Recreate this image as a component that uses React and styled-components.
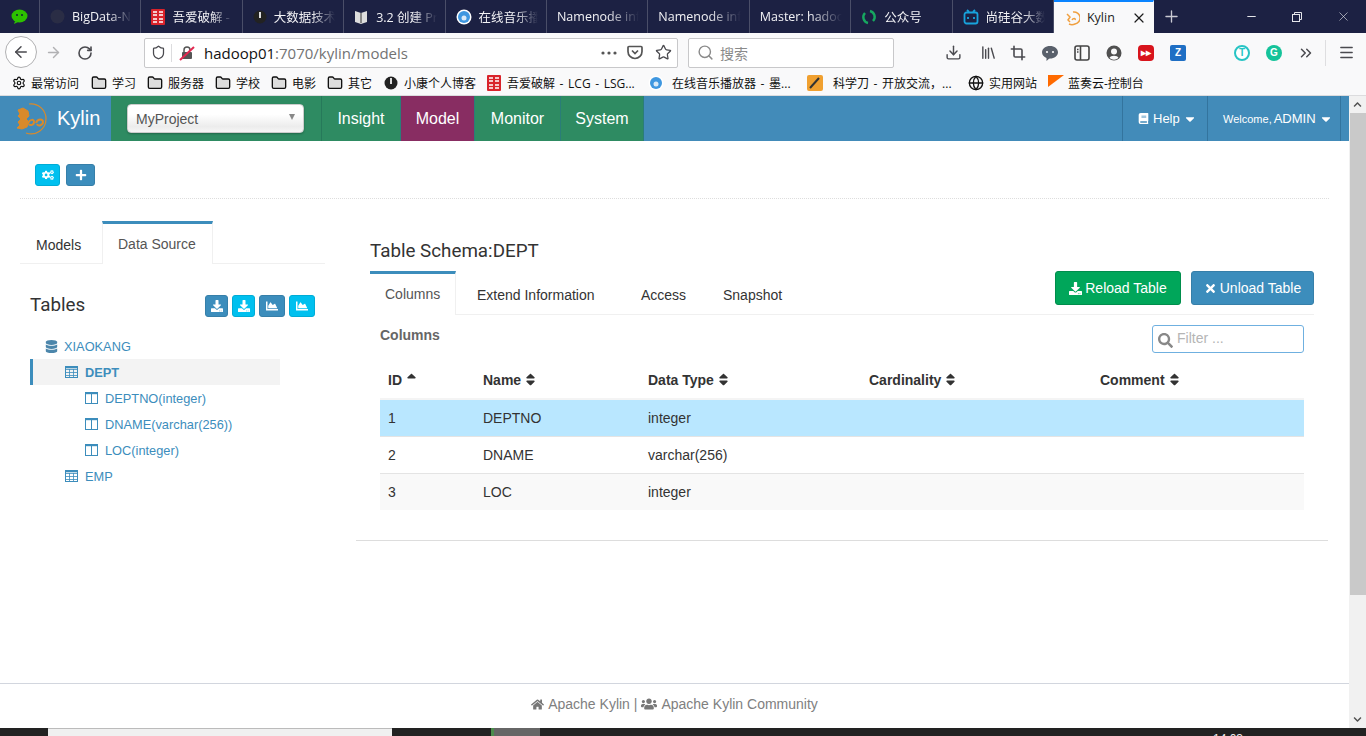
import React from "react";
import styled, { createGlobalStyle } from "styled-components";
import {
  ArrowLeft,
  ArrowRight,
  RotateCw,
  Shield,
  Star,
  Search,
  Download,
  Library,
  Crop,
  Menu,
  Settings,
  Folder,
  Globe,
  ChevronsRight,
  Minus,
  X,
  Plus,
} from "lucide-react";
import {
  FaCogs,
  FaPlus,
  FaDownload,
  FaChartArea,
  FaDatabase,
  FaSearch,
  FaTimes,
  FaBook,
  FaHome,
  FaUsers,
  FaSort,
  FaSortUp,
  FaCaretDown,
  FaChevronUp,
  FaChevronDown,
} from "react-icons/fa";

const GlobalStyle = createGlobalStyle`
  html, body {
    margin: 0;
    height: 736px;
    overflow: hidden;
    background: #fff;
  }
  * {
    box-sizing: border-box;
  }
  body {
    font-family: "Liberation Sans", Arial, sans-serif;
    color: #333;
  }
`;

const CJK = `"Open Sans", "Noto Sans CJK SC", sans-serif`;

const Screen = styled.div`
  display: flex;
  flex-direction: column;
  width: 1366px;
  height: 736px;
`;

/* browser chrome */
const TabStrip = styled.div`
  display: flex;
  height: 33px;
  background: #1c2143;
  flex: none;
`;

const PinnedTab = styled.div`
  width: 40px;
  display: flex;
  align-items: center;
  justify-content: center;
  border-right: 1px solid #4a4e68;
`;

const BrowserTab = styled.div`
  width: ${(p) => (p.$active ? "100px" : "101.4px")};
  display: flex;
  align-items: center;
  gap: 7px;
  padding: 0 0 0 10px;
  font: 12.5px ${CJK};
  color: ${(p) => (p.$active ? "#1c1c1c" : "#f2f2f5")};
  background: ${(p) => (p.$active ? "#f9f9fa" : "transparent")};
  border-right: 1px solid ${(p) => (p.$active ? "transparent" : "#4a4e68")};
  border-top: ${(p) => (p.$active ? "2px solid #0a84ff" : "none")};
  overflow: hidden;
  white-space: nowrap;
  flex: none;
`;

const TabTitle = styled.span`
  flex: 1;
  overflow: hidden;
  margin-right: ${(p) => (p.$plain ? "0" : "8px")};
  -webkit-mask-image: ${(p) =>
    p.$plain ? "none" : "linear-gradient(90deg, #000 62%, transparent 100%)"};
  mask-image: ${(p) =>
    p.$plain ? "none" : "linear-gradient(90deg, #000 62%, transparent 100%)"};
`;

const NewTab = styled.div`
  width: 34px;
  margin-left: 1px;
  display: flex;
  align-items: center;
  justify-content: center;
  color: #c9cad3;
`;

const WindowControls = styled.div`
  margin-left: auto;
  display: flex;
  align-items: center;
  color: #e4e5ea;
`;

const WindowButton = styled.div`
  width: 46px;
  display: flex;
  justify-content: center;
`;

const RestoreIcon = () => (
  <svg width="12" height="12" viewBox="0 0 12 12" fill="none" stroke="currentColor">
    <rect x="1.5" y="3.5" width="7" height="7" />
    <path d="M3.5 3V1.5h7v7H9" />
  </svg>
);

const NavBar = styled.div`
  height: 35px;
  flex: none;
  display: flex;
  align-items: center;
  padding-top: 4px;
  background: #f9f9fa;
  color: #4a4a4f;
`;

const BackCircle = styled.div`
  width: 32px;
  height: 32px;
  margin-left: 5px;
  margin-top: -1px;
  border-radius: 50%;
  background: #fff;
  border: 1px solid #b1b1b3;
  display: flex;
  align-items: center;
  justify-content: center;
  flex: none;
`;

const NavIcon = styled.div`
  width: ${(p) => p.$w || 32}px;
  display: flex;
  justify-content: center;
  align-items: center;
  color: ${(p) => p.$color || "inherit"};
  flex: none;
`;

const UrlBar = styled.div`
  width: 534px;
  height: 30px;
  margin: 0 0 0 43px;
  background: #fff;
  border: 1px solid #c8c8ca;
  border-radius: 2px;
  display: flex;
  align-items: center;
  font: 15px "Open Sans", sans-serif;
  flex: none;
`;

const UrlDivider = styled.div`
  width: 1px;
  height: 18px;
  background: #dcdcde;
  margin: 0 7px 0 0;
`;

const UrlGap = styled.span`
  width: 9px;
  flex: none;
`;

const UrlHost = styled.span`
  color: #111;
`;

const UrlPath = styled.span`
  color: #737373;
  flex: 1;
`;

const SearchBox = styled.div`
  width: 206px;
  height: 30px;
  margin-left: 10px;
  background: #fff;
  border: 1px solid #c8c8ca;
  border-radius: 2px;
  display: flex;
  align-items: center;
  gap: 6px;
  padding-left: 8px;
  color: #8a8a8a;
  font: 14px "Noto Sans CJK SC", sans-serif;
  flex: none;
`;

const ToolIcon = styled.div`
  width: 32px;
  display: flex;
  justify-content: center;
  align-items: center;
  flex: none;
  margin-left: ${(p) => p.$ml || 0}px;
`;

const ToolBadge = styled.div`
  width: 16px;
  height: 16px;
  border-radius: ${(p) => p.$radius || "50%"};
  background: ${(p) => p.$bg};
  color: ${(p) => p.$fg || "#fff"};
  border: ${(p) => p.$border || "none"};
  font: bold 10px "Liberation Sans", sans-serif;
  display: flex;
  align-items: center;
  justify-content: center;
`;

const ToolDivider = styled.div`
  width: 1px;
  height: 26px;
  background: #dedee0;
  margin: 0 6px 0 3px;
`;

const BookmarkBar = styled.div`
  height: 28px;
  flex: none;
  background: #f9f9fa;
  border-bottom: 1px solid #dcdcde;
  display: flex;
  align-items: center;
  padding: 3px 0 0 12px;
  font: 12px ${CJK};
  word-spacing: 1.5px;
  color: #111;
`;

const Bookmark = styled.div`
  display: flex;
  align-items: center;
  gap: ${(p) => p.$gap || 5}px;
  white-space: nowrap;
  width: ${(p) => p.$w}px;
  flex: none;
`;

const RedIcon = () => (
  <svg width="14" height="16" viewBox="0 0 14 16">
    <rect width="14" height="16" rx="1" fill="#d9232b" />
    <path d="M2 3h4M8 3h4M2 6h4M8 6h4M2 10h4M8 10h4M2 13h4M8 13h4" stroke="#fff" strokeWidth="1.3" />
  </svg>
);

const PlayerIcon = () => (
  <svg width="16" height="16" viewBox="0 0 16 16">
    <circle cx="8" cy="8" r="7.5" fill="#fff" />
    <circle cx="8" cy="8" r="6" fill="#3f97e0" />
    <circle cx="8" cy="9" r="2.5" fill="#d9e9f7" />
  </svg>
);

const DarkDot = () => (
  <svg width="14" height="16" viewBox="0 0 14 16">
    <circle cx="7" cy="8" r="6.5" fill="#222" />
    <path d="M7 3v6" stroke="#ddd" strokeWidth="2" />
  </svg>
);

const BubbleIcon = () => (
  <svg width="18" height="18" viewBox="0 0 18 18">
    <path d="M9 2c4.400 0 8 2.700 8 6.300s-3.600 6.300-8 6.300l-1 .1-2.500 2.300V14C3 13 1 11 1 8.300 1 4.700 4.600 2 9 2z" fill="#59606b" />
    <circle cx="6" cy="8" r="1.1" fill="#f9f9fa" />
    <circle cx="12" cy="8" r="1.1" fill="#f9f9fa" />
  </svg>
);

const SidebarIcon = () => (
  <svg width="16" height="16" viewBox="0 0 16 16" fill="none" stroke="#444" strokeWidth="1.6">
    <rect x="1" y="1" width="14" height="14" rx="2" />
    <path d="M6.500 1v14M3 4.500h1.500M3 7h1.500" />
  </svg>
);

const PersonIcon = () => (
  <svg width="16" height="16" viewBox="0 0 16 16">
    <circle cx="8" cy="8" r="7.500" fill="#505050" />
    <circle cx="8" cy="6.500" r="3" fill="#f9f9fa" />
    <path d="M3.500 13c1-3 8-3 9 0a7 7 0 0 1-9 0z" fill="#f9f9fa" />
  </svg>
);

/* page area */
const Viewport = styled.div`
  flex: 1;
  display: flex;
  min-height: 0;
`;

const Page = styled.div`
  flex: 1;
  display: flex;
  flex-direction: column;
  min-width: 0;
`;

const Scrollbar = styled.div`
  width: 17px;
  display: flex;
  flex-direction: column;
  background: #f1f1f1;
  color: #505050;
`;

const ScrollArrow = styled.div`
  height: 17px;
  display: flex;
  align-items: center;
  justify-content: center;
  flex: none;
`;

const ScrollThumb = styled.div`
  height: 482px;
  background: #c9c9c9;
  margin: 0 0 auto 1px;
`;

const Header = styled.header`
  height: 45px;
  flex: none;
  display: flex;
  background: #428bb9;
  color: #fff;
`;

const Brand = styled.div`
  width: 111px;
  display: flex;
  align-items: center;
  gap: 9px;
  padding-left: 14px;
  font-size: 20px;
`;

const ProjectCell = styled.div`
  width: 211px;
  background: #2e8b62;
  border-right: 1px solid #26795a;
  padding: 8px 0 0 16px;
`;

const ProjectSelect = styled.div`
  width: 177px;
  height: 29px;
  border-radius: 4px;
  background: linear-gradient(#fff 35%, #ececec 80%, #f6f6f6);
  border: 1px solid #ccc;
  box-shadow: 0 1px 2px rgba(0, 0, 0, 0.25);
  display: flex;
  align-items: center;
  justify-content: space-between;
  padding: 0 8px;
  font-size: 14px;
  color: #555;
`;

const SelectCaret = styled.span`
  width: 0;
  height: 0;
  border-left: 3.5px solid transparent;
  border-right: 3.5px solid transparent;
  border-top: 6px solid #888;
  margin-top: -3px;
`;

const MainNavItem = styled.div`
  width: ${(p) => p.$w}px;
  display: flex;
  align-items: center;
  justify-content: center;
  font-size: 16px;
  background: ${(p) => (p.$active ? "#882d62" : "#2e8b62")};
  border-right: 1px solid #2a7d78;
`;

const HeaderRight = styled.div`
  margin-left: auto;
  display: flex;
  margin-right: 8px;
`;

const HeaderItem = styled.div`
  width: ${(p) => p.$w}px;
  display: flex;
  align-items: center;
  padding-left: ${(p) => p.$pl}px;
  gap: 4px;
  font-size: ${(p) => p.$size}px;
  border-left: 1px solid #33749e;
  border-right: ${(p) => (p.$last ? "1px solid #33749e" : "none")};
`;

const HeaderCaret = styled(FaCaretDown)`
  font-size: 14px;
  margin-left: -1px;
`;

const AdminName = styled.span`
  font-size: 13px;
  margin-left: -2px;
`;

const Main = styled.main`
  flex: 1;
  padding: 0 20px;
  min-height: 0;
`;

const ActionBar = styled.div`
  height: 58px;
  padding: 23px 0 0 15px;
  border-bottom: 1px dotted #ddd;
  display: flex;
  align-items: flex-start;
  gap: 6px;
`;

const IconButton = styled.div`
  width: ${(p) => p.$w || 25}px;
  height: 22px;
  border-radius: 3px;
  color: #fff;
  font-size: 12px;
  background: ${(p) => (p.$light ? "#00c0ef" : "#3c8dbc")};
  border: 1px solid ${(p) => (p.$light ? "#00acd6" : "#367fa9")};
  display: flex;
  align-items: center;
  justify-content: center;
`;

const Content = styled.div`
  display: flex;
  padding-top: 22px;
`;

const LeftColumn = styled.aside`
  width: 305px;
  flex: none;
`;

const LeftTabs = styled.div`
  height: 43px;
  display: flex;
  border-bottom: 1px solid #f0f0f0;
  font-size: 14px;
`;

const LeftTab = styled.div`
  width: ${(p) => p.$w}px;
  height: ${(p) => (p.$active ? "43px" : "42px")};
  display: flex;
  align-items: center;
  padding: ${(p) => (p.$active ? "0 0 0 15px" : "2px 0 0 15px")};
  color: ${(p) => (p.$active ? "#555" : "#333")};
  background: #fff;
  border-top: 3px solid ${(p) => (p.$active ? "#3c8dbc" : "transparent")};
  border-left: 1px solid ${(p) => (p.$active ? "#f0f0f0" : "transparent")};
  border-right: 1px solid ${(p) => (p.$active ? "#f0f0f0" : "transparent")};
`;

const TablesHeader = styled.div`
  display: flex;
  align-items: center;
  justify-content: space-between;
  margin-top: 31px;
  padding: 0 10px;
  height: 22px;
`;

const TablesTitle = styled.h3`
  margin: -2px 0 0;
  font: 400 18.8px Roboto, sans-serif;
  color: #333;
`;

const ButtonGroup = styled.div`
  display: flex;
  gap: 4px;
`;

const Tree = styled.div`
  width: 250px;
  margin: 16px 0 0 10px;
`;

const TreeRow = styled.div`
  height: 26px;
  display: flex;
  align-items: center;
  gap: 7px;
  padding-left: ${(p) => p.$indent - (p.$selected ? 3 : 0)}px;
  font-size: 12.8px;
  font-weight: ${(p) => (p.$selected ? "bold" : "normal")};
  color: #3c8dbc;
  background: ${(p) => (p.$selected ? "#f3f3f3" : "transparent")};
  border-left: ${(p) => (p.$selected ? "3px solid #3c8dbc" : "none")};
`;

const TreeDbIcon = styled(FaDatabase)`
  color: #4c86ab;
  font-size: 13px;
  margin-right: -1px;
`;

const TableIcon = () => (
  <svg width="13" height="12" viewBox="0 0 13 12" fill="none" stroke="#3c8dbc">
    <rect x="0.500" y="0.500" width="12" height="11" />
    <path d="M0 3.500h13M0 6.500h13M0 9.500h13M4.500 3v9M8.500 3v9" strokeWidth="0.800" />
    <path d="M0 1.500h13" strokeWidth="1.600" />
  </svg>
);

const ColumnIcon = () => (
  <svg width="13" height="12" viewBox="0 0 13 12" fill="none" stroke="#3c8dbc">
    <rect x="0.500" y="0.500" width="12" height="11" />
    <path d="M6.500 1v11" />
    <path d="M0 1.500h13" strokeWidth="1.400" />
  </svg>
);

const RightColumn = styled.section`
  width: 972px;
  margin-left: 31px;
  padding: 0 14px;
  height: 320px;
  border-bottom: 1px solid #ddd;
`;

const SchemaTitle = styled.h3`
  margin: 0;
  height: 50px;
  padding-top: 15px;
  font: 400 18.8px/30px Roboto, sans-serif;
  color: #333;
`;

const SchemaTabs = styled.div`
  height: 44px;
  display: flex;
  border-bottom: 1px solid #f0f0f0;
  font-size: 14px;
`;

const SchemaTab = styled.div`
  width: ${(p) => p.$w}px;
  height: ${(p) => (p.$active ? "44px" : "43px")};
  display: flex;
  align-items: center;
  padding: ${(p) => (p.$active ? `0 0 2px ${p.$pl}px` : `2px 0 0 ${p.$pl}px`)};
  color: ${(p) => (p.$active ? "#555" : "#333")};
  background: #fff;
  border-top: 3px solid ${(p) => (p.$active ? "#3c8dbc" : "transparent")};
  border-right: 1px solid ${(p) => (p.$active ? "#f0f0f0" : "transparent")};
`;

const TabActions = styled.div`
  margin-left: auto;
  display: flex;
  gap: 10px;
`;

const ActionButton = styled.div`
  width: ${(p) => p.$w}px;
  height: 34px;
  border-radius: 3px;
  color: #fff;
  background: ${(p) => p.$bg};
  border: 1px solid ${(p) => p.$line};
  font-size: 14px;
  display: flex;
  align-items: center;
  justify-content: center;
  gap: 3px;
`;

const TabBody = styled.div`
  padding: 10px 10px 0;
`;

const BodyTop = styled.div`
  display: flex;
  justify-content: space-between;
  height: 37px;
`;

const SectionLabel = styled.div`
  font-size: 14px;
  font-weight: bold;
  color: #666;
  line-height: 20px;
`;

const FilterBox = styled.div`
  width: 152px;
  height: 28px;
  border: 1px solid #6fb0e0;
  border-radius: 3px;
  display: flex;
  align-items: center;
  gap: 4px;
  padding: 0 0 2px 5px;
  font-size: 14px;
  color: #b5b5b5;
`;

const FilterIcon = styled.span`
  color: #888;
  display: flex;
  font-size: 15px;
  margin-top: 5px;
`;

const Table = styled.table`
  width: 924px;
  border-collapse: collapse;
  table-layout: fixed;
  font-size: 14px;
`;

const HeadCell = styled.th`
  width: ${(p) => p.$w}px;
  height: 37px;
  padding: 2px 8px 0;
  text-align: left;
  font-weight: bold;
  color: #333;
  border-bottom: 2px solid #f4f4f4;
  white-space: nowrap;
`;

const SortIcon = styled.span`
  font-size: 15px;
  margin-left: 2px;
  vertical-align: -2px;
`;

const Row = styled.tr`
  background: ${(p) => p.$bg || "#fff"};
`;

const Cell = styled.td`
  height: 37px;
  padding: 0 8px;
  color: #333;
  border-top: 1px solid #e4e4e4;
`;

const Footer = styled.footer`
  height: 45px;
  flex: none;
  border-top: 1px solid #d2d6de;
  display: flex;
  align-items: center;
  justify-content: center;
  gap: 4px;
  padding-bottom: 4px;
  font-size: 14px;
  color: #808080;
`;

const FooterIcon = styled.span`
  display: flex;
  color: #777;
  font-size: 13px;
`;

const Taskbar = styled.div`
  height: 8px;
  flex: none;
  background: #222;
  display: flex;
  overflow: hidden;
`;

const TaskbarSearch = styled.div`
  width: 344px;
  margin-left: 48px;
  background: #f0f0f0;
  border-top: 1px solid #bbb;
`;

const TaskbarApp = styled.div`
  width: 49px;
  margin-left: 99px;
  background: #666;
  border-left: 3px solid #4c8c4c;
`;

const TaskbarClock = styled.div`
  margin-left: 673px;
  padding-top: 4px;
  font-size: 12px;
  line-height: 14px;
  height: 8px;
  color: #eee;
`;

const tabs = [
  ["BigData-N", <svg key="g" width="15" height="15"><circle cx="7.5" cy="7.5" r="7" fill="#2a2d45" /></svg>],
  ["吾爱破解 -", <RedIcon key="r" />],
  ["大数据技术", <DarkDot key="d" />],
  ["3.2 创建 Pr", <svg key="b" width="15" height="14" viewBox="0 0 15 14"><path d="M1 1l6 2 6-2v11l-6 2-6-2z" fill="#ddd" /><path d="M7 3v10" stroke="#333" /></svg>],
  ["在线音乐播", <PlayerIcon key="p" />],
  ["Namenode inf", null],
  ["Namenode inf", null],
  ["Master: hadoo", null],
  ["公众号", <svg key="w" width="16" height="16" viewBox="0 0 16 16" fill="none" stroke="#17a860" strokeWidth="2.4"><path d="M9 2a6 6 0 0 1 3 10M7 14a6 6 0 0 1-3-10" /></svg>],
  ["尚硅谷大数", <svg key="t" width="16" height="16" viewBox="0 0 16 16" fill="none" stroke="#18a3dc" strokeWidth="1.8"><rect x="1.5" y="3.5" width="13" height="11" rx="2" /><path d="M4 1l2 2M12 1l-2 2M5 8v2M11 8v2" /></svg>],
];

const bookmarks = [
  ["最常访问", <Settings key="s" size={14} />, 79],
  ["学习", <Folder key="f" size={16} fill="#ddd" />, 56],
  ["服务器", <Folder key="f" size={16} fill="#ddd" />, 68],
  ["学校", <Folder key="f" size={16} fill="#ddd" />, 56],
  ["电影", <Folder key="f" size={16} fill="#ddd" />, 56],
  ["其它", <Folder key="f" size={16} fill="#ddd" />, 57],
  ["小康个人博客", <DarkDot key="d" />, 103, 6],
  ["吾爱破解 - LCG - LSG...", <RedIcon key="r" />, 161, 6],
  ["在线音乐播放器 - 墨...", <PlayerIcon key="p" />, 159, 8],
  ["科学刀 - 开放交流，...", <svg key="k" width="16" height="16"><rect width="16" height="16" rx="2" fill="#f0a030" /><path d="M3 13L12 3" stroke="#333" strokeWidth="2" /></svg>, 161, 10],
  ["实用网站", <Globe key="g" size={16} />, 80],
  ["蓝奏云-控制台", <svg key="l" width="16" height="16"><path d="M0 0h16L0 12z" fill="#ff6a00" /></svg>, 110, 4],
];

const columns = [
  ["ID", 95, true],
  ["Name", 165],
  ["Data Type", 221],
  ["Cardinality", 231],
  ["Comment", 212],
];

const rows = [
  ["1", "DEPTNO", "integer", "#b9e7ff"],
  ["2", "DNAME", "varchar(256)", "#fff"],
  ["3", "LOC", "integer", "#f9f9f9"],
];

const KylinLogo = () => (
  <svg width="34" height="34" viewBox="0 0 34 34" fill="none" stroke="#d98a2b">
    <path d="M15 2a15 15 0 0 1 17 15 15 15 0 0 1-20 14" strokeWidth="1.2" />
    <path d="M4 8l5-2 5 3 1 5-3 3 3 3-2 5-5 2-5-1 3-3-2-3 3-3-3-3 2-2z" fill="#d98a2b" strokeWidth="1" />
    <path d="M14 21c2-4 6-4 6-1s-4 4-5 2M22 21c2-5 7-4 7-1s-5 5-6 2" strokeWidth="2" />
  </svg>
);

export default function App() {
  return (
    <Screen>
      <GlobalStyle />
      <TabStrip>
        <PinnedTab>
          <svg width="17" height="15" viewBox="0 0 17 15">
            <ellipse cx="8.5" cy="7" rx="8" ry="6.5" fill="#2dc100" />
            <path d="M4 12l-1 3 4-2z" fill="#2dc100" />
            <circle cx="6" cy="6" r="1" fill="#123" />
            <circle cx="11" cy="6" r="1" fill="#123" />
          </svg>
        </PinnedTab>
        {tabs.map(([title, icon], i) => (
          <BrowserTab key={i}>
            {icon}
            <TabTitle>{title}</TabTitle>
          </BrowserTab>
        ))}
        <BrowserTab $active>
          <svg width="16" height="16" viewBox="0 0 16 16" fill="none" stroke="#f0a040" strokeWidth="1.5">
            <path d="M9 2a6 6 0 0 1 2 12 7 7 0 0 1-6 0M3 4l3 3-2 3 2 2M8 10c1-2 4-2 3 0" />
          </svg>
          <TabTitle $plain>Kylin</TabTitle>
          <NavIcon $w={28}>
            <X size={16} strokeWidth={1.8} />
          </NavIcon>
        </BrowserTab>
        <NewTab>
          <Plus size={19} strokeWidth={1.7} />
        </NewTab>
        <WindowControls>
          <WindowButton>
            <Minus size={13} />
          </WindowButton>
          <WindowButton>
            <RestoreIcon />
          </WindowButton>
          <WindowButton>
            <X size={15} strokeWidth={1} />
          </WindowButton>
        </WindowControls>
      </TabStrip>

      <NavBar>
        <BackCircle>
          <ArrowLeft size={18} strokeWidth={2} />
        </BackCircle>
        <NavIcon $color="#b1b1b3">
          <ArrowRight size={17} />
        </NavIcon>
        <NavIcon>
          <RotateCw size={16} strokeWidth={2.4} />
        </NavIcon>
        <UrlBar>
          <NavIcon $w={26}>
            <Shield size={15} />
          </NavIcon>
          <UrlDivider />
          <NavIcon $w={16}>
            <svg width="16" height="16" viewBox="0 0 16 16">
              <rect x="3" y="7" width="10" height="7" rx="1" fill="#555" />
              <path d="M5 7V5a3 3 0 0 1 6 0" fill="none" stroke="#555" strokeWidth="1.5" />
              <path d="M1 15L15 2" stroke="#e22850" strokeWidth="2" />
            </svg>
          </NavIcon>
          <UrlGap />
          <UrlHost>hadoop01</UrlHost>
          <UrlPath>:7070/kylin/models</UrlPath>
          <NavIcon $w={24}>
            <svg width="16" height="4" viewBox="0 0 16 4" fill="#555">
              <circle cx="2" cy="2" r="1.6" />
              <circle cx="8" cy="2" r="1.6" />
              <circle cx="14" cy="2" r="1.6" />
            </svg>
          </NavIcon>
          <NavIcon $w={28}>
            <svg width="16" height="15" viewBox="0 0 16 15" fill="none" stroke="#555" strokeWidth="1.7">
              <path d="M2 1.5h12a1 1 0 0 1 1 1v4a7 7 0 0 1-14 0v-4a1 1 0 0 1 1-1z" />
              <path d="M5 5.5l3 3 3-3" />
            </svg>
          </NavIcon>
          <NavIcon $w={28}>
            <Star size={17} strokeWidth={1.8} />
          </NavIcon>
        </UrlBar>
        <SearchBox>
          <Search size={17} />
          搜索
        </SearchBox>
        <ToolIcon $ml={43}>
          <Download size={17} />
        </ToolIcon>
        <ToolIcon $ml={3}>
          <Library size={17} />
        </ToolIcon>
        <ToolIcon $ml={-2}>
          <Crop size={16} strokeWidth={2.4} />
        </ToolIcon>
        <ToolIcon>
          <BubbleIcon />
        </ToolIcon>
        <ToolIcon>
          <SidebarIcon />
        </ToolIcon>
        <ToolIcon>
          <PersonIcon />
        </ToolIcon>
        <ToolIcon>
          <ToolBadge $bg="#d8141c" $radius="4px">▸▸</ToolBadge>
        </ToolIcon>
        <ToolIcon>
          <ToolBadge $bg="#1f6fc4" $radius="2px">Z</ToolBadge>
        </ToolIcon>
        <ToolIcon $ml={32}>
          <ToolBadge $bg="#fff" $fg="#27c4c4" $border="2px solid #27c4c4">T</ToolBadge>
        </ToolIcon>
        <ToolIcon>
          <ToolBadge $bg="#15c39a">G</ToolBadge>
        </ToolIcon>
        <ToolIcon>
          <ChevronsRight size={18} />
        </ToolIcon>
        <ToolDivider />
        <NavIcon $w={28}>
          <Menu size={17} />
        </NavIcon>
      </NavBar>

      <BookmarkBar>
        {bookmarks.map(([label, icon, w, gap]) => (
          <Bookmark key={label} $w={w} $gap={gap}>
            {icon}
            {label}
          </Bookmark>
        ))}
      </BookmarkBar>

      <Viewport>
        <Page>
          <Header>
            <Brand>
              <KylinLogo />
              Kylin
            </Brand>
            <ProjectCell>
              <ProjectSelect>
                MyProject
                <SelectCaret />
              </ProjectSelect>
            </ProjectCell>
            <MainNavItem $w={79}>Insight</MainNavItem>
            <MainNavItem $w={74} $active>
              Model
            </MainNavItem>
            <MainNavItem $w={86}>Monitor</MainNavItem>
            <MainNavItem $w={83}>System</MainNavItem>
            <HeaderRight>
              <HeaderItem $w={85} $pl={15} $size={13}>
                <FaBook size={11} />
                Help
                <HeaderCaret />
              </HeaderItem>
              <HeaderItem $w={134} $pl={15} $size={11} $last>
                Welcome, <AdminName>ADMIN</AdminName>
                <HeaderCaret />
              </HeaderItem>
            </HeaderRight>
          </Header>

          <Main>
            <ActionBar>
              <IconButton $light>
                <FaCogs />
              </IconButton>
              <IconButton $w={29}>
                <FaPlus />
              </IconButton>
            </ActionBar>
            <Content>
              <LeftColumn>
                <LeftTabs>
                  <LeftTab $w={82}>Models</LeftTab>
                  <LeftTab $w={111} $active>
                    Data Source
                  </LeftTab>
                </LeftTabs>
                <TablesHeader>
                  <TablesTitle>Tables</TablesTitle>
                  <ButtonGroup>
                    <IconButton $w={23}>
                      <FaDownload />
                    </IconButton>
                    <IconButton $w={23} $light>
                      <FaDownload />
                    </IconButton>
                    <IconButton $w={26}>
                      <FaChartArea />
                    </IconButton>
                    <IconButton $w={26} $light>
                      <FaChartArea />
                    </IconButton>
                  </ButtonGroup>
                </TablesHeader>
                <Tree>
                  <TreeRow $indent={15}>
                    <TreeDbIcon />
                    XIAOKANG
                  </TreeRow>
                  <TreeRow $indent={35} $selected>
                    <TableIcon />
                    DEPT
                  </TreeRow>
                  <TreeRow $indent={55}>
                    <ColumnIcon />
                    DEPTNO(integer)
                  </TreeRow>
                  <TreeRow $indent={55}>
                    <ColumnIcon />
                    DNAME(varchar(256))
                  </TreeRow>
                  <TreeRow $indent={55}>
                    <ColumnIcon />
                    LOC(integer)
                  </TreeRow>
                  <TreeRow $indent={35}>
                    <TableIcon />
                    EMP
                  </TreeRow>
                </Tree>
              </LeftColumn>

              <RightColumn>
                <SchemaTitle>Table Schema:DEPT</SchemaTitle>
                <SchemaTabs>
                  <SchemaTab $w={86} $pl={15} $active>
                    Columns
                  </SchemaTab>
                  <SchemaTab $w={164} $pl={21}>
                    Extend Information
                  </SchemaTab>
                  <SchemaTab $w={82} $pl={21}>
                    Access
                  </SchemaTab>
                  <SchemaTab $w={90} $pl={21}>
                    Snapshot
                  </SchemaTab>
                  <TabActions>
                    <ActionButton $w={126} $bg="#00a65a" $line="#008d4c">
                      <FaDownload size={13} />
                      Reload Table
                    </ActionButton>
                    <ActionButton $w={123} $bg="#3c8dbc" $line="#367fa9">
                      <FaTimes size={13} />
                      Unload Table
                    </ActionButton>
                  </TabActions>
                </SchemaTabs>
                <TabBody>
                  <BodyTop>
                    <SectionLabel>Columns</SectionLabel>
                    <FilterBox>
                      <FilterIcon>
                        <FaSearch />
                      </FilterIcon>
                      Filter ...
                    </FilterBox>
                  </BodyTop>
                  <Table>
                    <thead>
                      <tr>
                        {columns.map(([name, w, sorted]) => (
                          <HeadCell key={name} $w={w}>
                            {name}
                            <SortIcon>{sorted ? <FaSortUp /> : <FaSort />}</SortIcon>
                          </HeadCell>
                        ))}
                      </tr>
                    </thead>
                    <tbody>
                      {rows.map(([id, name, type, bg]) => (
                        <Row key={id} $bg={bg}>
                          <Cell>{id}</Cell>
                          <Cell>{name}</Cell>
                          <Cell>{type}</Cell>
                          <Cell />
                          <Cell />
                        </Row>
                      ))}
                    </tbody>
                  </Table>
                </TabBody>
              </RightColumn>
            </Content>
          </Main>

          <Footer>
            <FooterIcon>
              <FaHome />
            </FooterIcon>
            Apache Kylin |
            <FooterIcon>
              <FaUsers size={16} />
            </FooterIcon>
            Apache Kylin Community
          </Footer>
        </Page>
        <Scrollbar>
          <ScrollArrow>
            <FaChevronUp size={9} />
          </ScrollArrow>
          <ScrollThumb />
          <ScrollArrow>
            <FaChevronDown size={9} />
          </ScrollArrow>
        </Scrollbar>
      </Viewport>
      <Taskbar>
        <TaskbarSearch />
        <TaskbarApp />
        <TaskbarClock>14:03</TaskbarClock>
      </Taskbar>
    </Screen>
  );
}
